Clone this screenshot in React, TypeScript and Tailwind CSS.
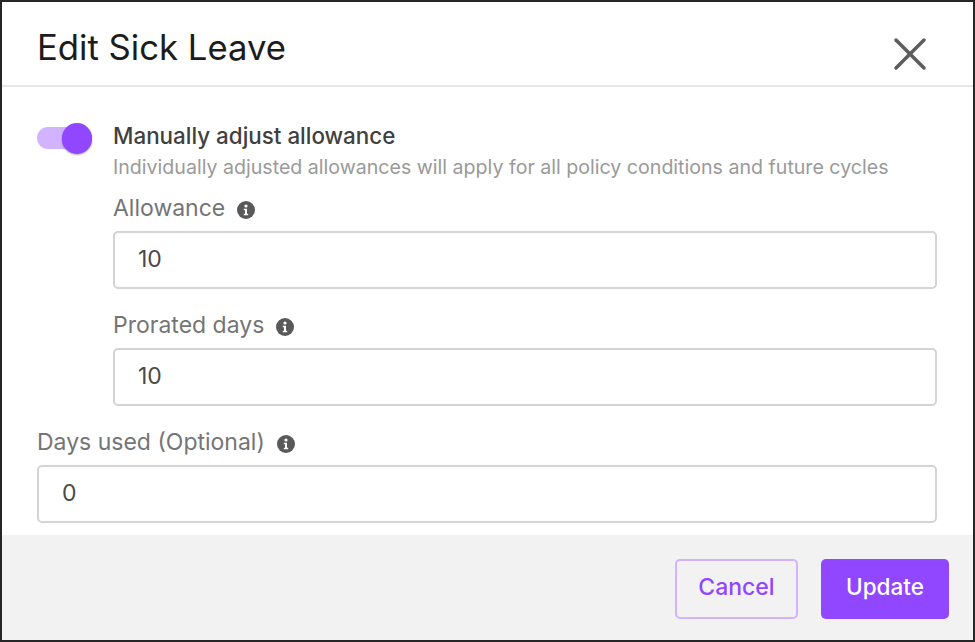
import React from 'react';
import { X } from 'lucide-react';

function InfoIcon() {
  return (
    <svg viewBox="0 0 18 18" className="w-[18px] h-[18px] shrink-0 mt-[4px]">
      <circle cx="9" cy="9" r="9" fill="#595959" />
      <circle cx="9" cy="5" r="1.6" fill="#fff" />
      <path d="M6.8 7.7h3.2v5h1.2v1.5H6.8v-1.5H8v-3.5H6.8z" fill="#fff" />
    </svg>
  );
}

function Field({ label, value }: { label: string; value: string }) {
  return (
    <div className="flex flex-col">
      <div className="flex items-center gap-[12px] h-[24px] text-[23px] leading-[24px] text-[#757575]">
        <span>{label}</span>
        <InfoIcon />
      </div>
      <div className="mt-[11px] h-[58px] rounded-[5px] border-2 border-[#d4d4d4] bg-white flex items-center pl-[23px] pb-[2px] text-[23px] text-[#4a4a4a]">
        {value}
      </div>
    </div>
  );
}

export default function App() {
  return (
    <div className="w-[975px] h-[642px] border-2 border-[#262626] bg-white flex flex-col overflow-hidden font-['Inter','Liberation_Sans',sans-serif]">
      <div className="h-[85px] shrink-0 border-b-2 border-[#e6e6e6] flex items-start justify-between pl-[35px] pr-[35px]">
        <h1 className="pt-[25px] text-[34.7px] leading-[40px] font-normal text-[#1c1c1c]">Edit Sick Leave</h1>
        <X className="w-[56px] h-[56px] mt-[24px] text-[#5c5c5c]" strokeWidth={1.5} />
      </div>

      <div className="flex-1 flex flex-col pl-[35px] pr-[36px] pt-[35px]">
        <div className="flex gap-[21px]">
          <div className="relative w-[55px] h-[22px] mt-[5px] shrink-0 rounded-full bg-[#d2b3ff]">
            <div className="absolute right-0 top-[-4px] w-[30px] h-[31px] rounded-full bg-[#9146ff] shadow-[0_1px_2px_rgba(0,0,0,0.35)]" />
          </div>
          <div className="flex flex-col">
            <div className="text-[22.4px] leading-[28px] font-medium text-[#404040] whitespace-nowrap">Manually adjust allowance</div>
            <div className="mt-[4px] text-[19.6px] leading-[26px] text-[#9a9a9a] whitespace-nowrap">
              Individually adjusted allowances will apply for all policy conditions and future cycles
            </div>
          </div>
        </div>

        <div className="ml-[76px] mt-[16px] flex flex-col gap-[24px]">
          <Field label="Allowance" value="10" />
          <Field label="Prorated days" value="10" />
        </div>
        <div className="mt-[24px]">
          <Field label="Days used (Optional)" value="0" />
        </div>
      </div>

      <div className="h-[105px] shrink-0 bg-[#f2f2f2] flex items-start justify-end gap-[23px] pt-[24px] pr-[24px]">
        <button className="w-[123px] h-[60px] pb-[4px] rounded-[5px] border-2 border-[#d2b3ff] text-[23px] font-medium text-[#9146ff]">
          Cancel
        </button>
        <button className="w-[128px] h-[60px] pb-[4px] rounded-[5px] bg-[#9146ff] text-[22.5px] font-medium text-white">
          Update
        </button>
      </div>
    </div>
  );
}
